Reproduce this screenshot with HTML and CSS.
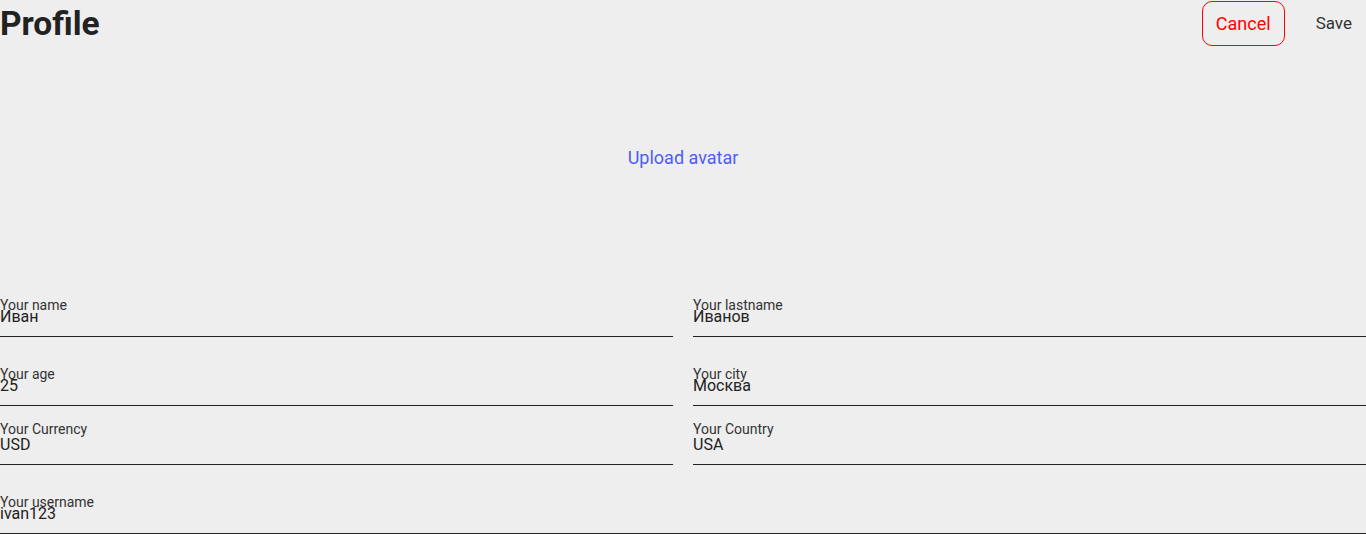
FILE: index.html
```html
<!DOCTYPE html>
<html lang="en">
<head>
<meta charset="utf-8">
<title>Profile</title>
<link rel="stylesheet" href="styles.css">
</head>
<body>
<div class="page">
  <header class="header">
    <h1 class="title">Profile</h1>
    <div class="actions">
      <button class="btn btn-cancel" type="button">Cancel</button>
      <button class="btn btn-save" type="button">Save</button>
    </div>
  </header>
  <section class="avatar">
    <button class="upload" type="button">Upload avatar</button>
  </section>
  <form class="fields">
    <label class="field">
      <span class="field-label">Your name</span>
      <input class="field-input" type="text" value="Иван" readonly>
    </label>
    <label class="field">
      <span class="field-label">Your lastname</span>
      <input class="field-input" type="text" value="Иванов" readonly>
    </label>
    <label class="field">
      <span class="field-label">Your age</span>
      <input class="field-input" type="text" value="25" readonly>
    </label>
    <label class="field">
      <span class="field-label">Your city</span>
      <input class="field-input" type="text" value="Москва" readonly>
    </label>
    <label class="field field-select">
      <span class="field-label">Your Currency</span>
      <span class="field-input">USD</span>
    </label>
    <label class="field field-select">
      <span class="field-label">Your Country</span>
      <span class="field-input">USA</span>
    </label>
    <label class="field field-wide">
      <span class="field-label">Your username</span>
      <input class="field-input" type="text" value="ivan123" readonly>
    </label>
  </form>
</div>
</body>
</html>
```

FILE: styles.css
```css
* {
  box-sizing: border-box;
}

html, body {
  margin: 0;
  padding: 0;
  background: #eeeeee;
}

body {
  font-family: Roboto, "Liberation Sans", Arial, sans-serif;
  color: #222222;
}

.page {
  width: 1366px;
}

.header {
  height: 47px;
  display: flex;
  align-items: center;
  justify-content: space-between;
}

.title {
  margin: 0;
  font-size: 33.5px;
  font-weight: 700;
  line-height: 37px;
  color: #222222;
}

.actions {
  display: flex;
  align-items: center;
  gap: 17px;
}

.btn {
  font-family: Roboto, "Liberation Sans", Arial, sans-serif;
  font-size: 18px;
  line-height: 21px;
  padding: 11px 13px;
  border: 1px solid transparent;
  border-radius: 10px;
  background: transparent;
  cursor: pointer;
}

.btn-cancel {
  color: #ff0000;
  border-color: #ff0000;
}

.btn-save {
  color: #333333;
  font-size: 17px;
}

.avatar {
  height: 221px;
  display: flex;
  align-items: center;
  justify-content: center;
}

.upload {
  font-family: Roboto, "Liberation Sans", Arial, sans-serif;
  font-size: 18px;
  line-height: 21px;
  color: #4b5ef5;
  background: transparent;
  border: none;
  padding: 0;
  cursor: pointer;
}

.fields {
  display: grid;
  grid-template-columns: 1fr 1fr;
  column-gap: 20px;
  margin: 0;
}

.field {
  height: 69px;
  display: flex;
  flex-direction: column;
  justify-content: flex-end;
  padding-bottom: 10px;
  border-bottom: 1px solid #222222;
}

.field-label {
  font-size: 14px;
  line-height: 16px;
  color: #333333;
  margin-bottom: -6px;
}

.field-input {
  display: block;
  width: 100%;
  font-family: Roboto, "Liberation Sans", Arial, sans-serif;
  font-size: 16px;
  line-height: 19px;
  height: 19px;
  padding: 0;
  margin: 0;
  border: none;
  outline: none;
  background: transparent;
  color: #222222;
}

.field-select {
  height: 59px;
  padding-bottom: 11px;
}

.field-select .field-label {
  line-height: 14px;
  margin-bottom: 1px;
}

.field-select .field-input {
  line-height: 16px;
  height: 16px;
}

.field-wide {
  grid-column: 1 / -1;
}
```
